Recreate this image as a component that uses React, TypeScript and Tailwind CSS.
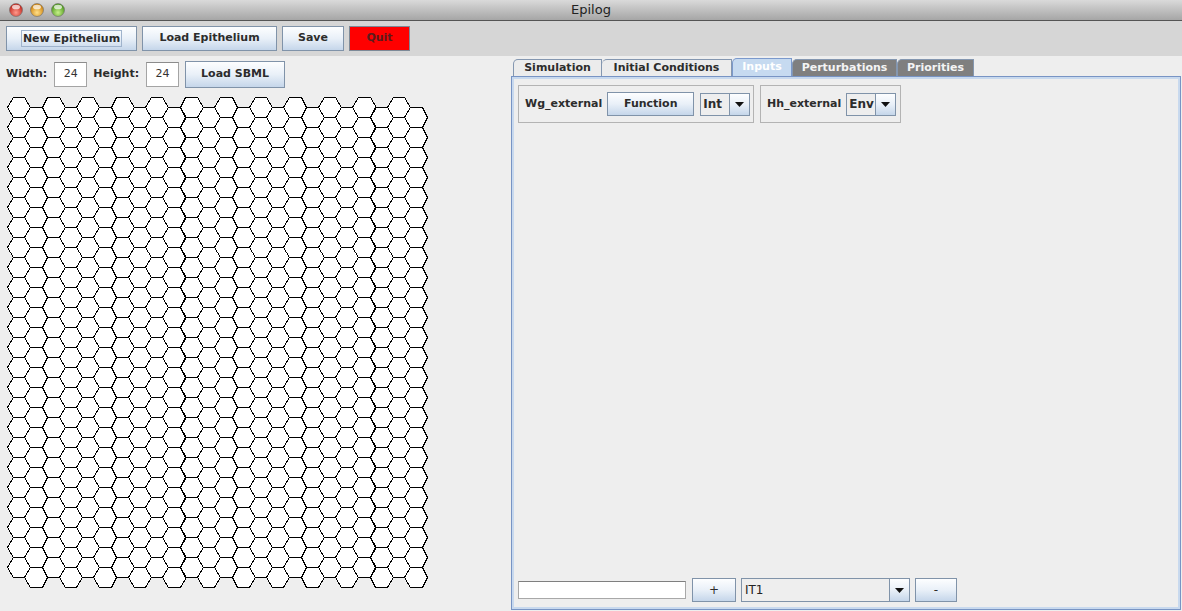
const R = 11.55;
const H = 20;
const DX = 17.27;

function hexPath() {
  const p = (v: number) => Math.round(v) + 0.5;
  let d = '';
  for (let c = 0; c < 24; c++) {
    for (let r = 0; r < 24; r++) {
      const cx = 1 + R + c * DX;
      const cy = 1 + H / 2 + r * H + (c % 2 ? H / 2 : 0);
      d += `M${p(cx - R)} ${p(cy)}L${p(cx - R / 2)} ${p(cy - H / 2)}L${p(cx + R / 2)} ${p(cy - H / 2)}L${p(cx + R)} ${p(cy)}L${p(cx + R / 2)} ${p(cy + H / 2)}L${p(cx - R / 2)} ${p(cy + H / 2)}Z`;
    }
  }
  return d;
}

const btn =
  'flex shrink-0 items-center justify-center border border-[#8093a9] bg-linear-to-b from-[#fdfeff] via-[#e9f0f8] to-[#c5d6ea] text-[11px] font-bold text-[#2c2c2c]';

function Arrow() {
  return (
    <div className="flex w-[20px] items-center justify-center border-l border-[#8093a9] bg-linear-to-b from-[#fdfeff] via-[#e9f0f8] to-[#c5d6ea]">
      <svg width="9" height="5" viewBox="0 0 9 5">
        <path d="M0 0H9L4.5 5Z" fill="#111" />
      </svg>
    </div>
  );
}

function Light({ from, to }: { from: string; to: string }) {
  return (
    <svg width="14" height="14" viewBox="0 0 14 14">
      <defs>
        <radialGradient id={from} cx="50%" cy="70%" r="60%">
          <stop offset="0%" stopColor={to} />
          <stop offset="100%" stopColor={from} />
        </radialGradient>
      </defs>
      <circle cx="7" cy="7" r="6.5" fill={`url(#${from})`} stroke="#6b6b6b" strokeWidth="0.6" />
      <ellipse cx="7" cy="4" rx="4" ry="2.3" fill="#ffffff" opacity="0.7" />
    </svg>
  );
}

export default function App() {
  return (
    <div className="flex h-[611px] w-[1182px] flex-col overflow-hidden bg-[#eeeeee] font-['DejaVu_Sans',sans-serif] text-[#2c2c2c]">
      {/* title bar */}
      <div className="relative flex h-[21px] shrink-0 items-center border-b border-[#555555] bg-linear-to-b from-[#dadada] to-[#a6a6a6] pl-[9px]">
        <div className="flex gap-[7px]">
          <Light from="#c4281f" to="#ff9a8c" />
          <Light from="#d0850f" to="#ffe08a" />
          <Light from="#4f9a1e" to="#c8f08a" />
        </div>
        <div className="absolute inset-0 flex items-center justify-center text-[13px] text-[#222222]">Epilog</div>
      </div>

      {/* toolbar */}
      <div className="flex h-[35px] shrink-0 items-center gap-[5px] bg-[#d6d6d6] pl-[6px]">
        <div className={`${btn} h-[25px] w-[131px]`}>
          <span className="border border-[#9fb3cc] px-[1px] leading-[15px]">New Epithelium</span>
        </div>
        <div className={`${btn} h-[25px] w-[135px]`}>Load Epithelium</div>
        <div className={`${btn} h-[25px] w-[62px]`}>Save</div>
        <div className="flex h-[25px] w-[61px] items-center justify-center border border-[#7d8a98] bg-[#ff0000] text-[11px] font-bold text-[#5a1c1c]">
          Quit
        </div>
      </div>

      <div className="flex min-h-0 flex-1">
        {/* left side */}
        <div className="flex w-[511px] shrink-0 flex-col pl-[6px] pt-[5px]">
          <div className="flex h-[27px] items-center text-[11px]">
            <span className="font-bold">Width:</span>
            <div className="ml-[7px] flex h-[25px] w-[33px] items-center justify-center border border-[#a4a4a4] border-t-[#8c8c8c] bg-white text-[11px] text-[#333333]">
              24
            </div>
            <span className="ml-[6px] font-bold">Height:</span>
            <div className="ml-[7px] flex h-[25px] w-[33px] items-center justify-center border border-[#a4a4a4] border-t-[#8c8c8c] bg-white text-[11px] text-[#333333]">
              24
            </div>
            <div className={`${btn} ml-[6px] h-[27px] w-[100px]`}>Load SBML</div>
          </div>
          <svg className="mt-[8px]" width="430" height="495" shapeRendering="crispEdges">
            <path d={hexPath()} fill="#ffffff" stroke="#000000" strokeWidth="1" />
          </svg>
        </div>

        {/* right side: tabbed pane */}
        <div className="flex min-w-0 flex-1 flex-col pb-[1px] pr-[1px] pt-[2px]">
          <div className="flex h-[18px] items-end pl-[2px] text-[11px] font-bold">
            <div className="flex h-[17px] w-[89px] items-center justify-center rounded-tl-[5px] border border-b-0 border-[#8497b0] bg-[#ececec] text-[#2c2c2c]">
              Simulation
            </div>
            <div className="flex h-[17px] w-[130px] items-center justify-center rounded-tl-[5px] border border-b-0 border-l-0 border-[#8497b0] bg-[#ececec] text-[#2c2c2c]">
              Initial Conditions
            </div>
            <div className="flex h-[18px] w-[60px] items-center justify-center rounded-tl-[5px] border border-b-0 border-[#7b99cc] bg-[#c6daf0] text-white">
              Inputs
            </div>
            <div className="flex h-[17px] w-[105px] items-center justify-center rounded-tl-[5px] border border-b-0 border-[#8497b0] bg-[#7f7f7f] text-[#f4f4f4]">
              Perturbations
            </div>
            <div className="flex h-[17px] w-[77px] items-center justify-center rounded-tl-[5px] border border-b-0 border-[#8497b0] bg-[#7f7f7f] text-[#f4f4f4]">
              Priorities
            </div>
          </div>

          <div className="flex min-h-0 flex-1 flex-col border border-[#7894c4] bg-[#eeeeee] pb-[7px] pl-[6px] pt-[8px] shadow-[inset_0_0_0_2px_#c8d9ee]">
            <div className="flex gap-[6px] text-[11px]">
              <div className="flex h-[38px] w-[236px] items-center border border-[#b3b3b3] pl-[6px]">
                <span className="font-bold">Wg_external</span>
                <div className={`${btn} ml-[5px] h-[24px] w-[87px]`}>Function</div>
                <div className="ml-[6px] flex h-[23px] w-[50px] border border-[#8093a9]">
                  <div className="flex flex-1 items-center bg-[#eeeeee] pl-[2px] text-[12px] font-bold">Int</div>
                  <Arrow />
                </div>
              </div>
              <div className="flex h-[38px] w-[141px] items-center border border-[#b3b3b3] pl-[6px]">
                <span className="font-bold">Hh_external</span>
                <div className="ml-[5px] flex h-[23px] w-[50px] border border-[#8093a9]">
                  <div className="flex flex-1 items-center bg-[#eeeeee] pl-[2px] text-[12px] font-bold">Env</div>
                  <Arrow />
                </div>
              </div>
            </div>

            <div className="flex-1" />

            <div className="flex items-center">
              <div className="h-[18px] w-[168px] border border-[#a8a8a8] border-t-[#7f7f7f] bg-white" />
              <div className={`${btn} ml-[6px] h-[24px] w-[44px] !font-normal text-[12px]`}>+</div>
              <div className="ml-[5px] flex h-[24px] w-[169px] border border-[#8093a9]">
                <div className="flex flex-1 items-center bg-[#eeeeee] pl-[3px] text-[12px] text-[#222222]">IT1</div>
                <Arrow />
              </div>
              <div className={`${btn} ml-[5px] h-[24px] w-[42px] !font-normal text-[12px]`}>-</div>
            </div>
          </div>
        </div>
      </div>
    </div>
  );
}
